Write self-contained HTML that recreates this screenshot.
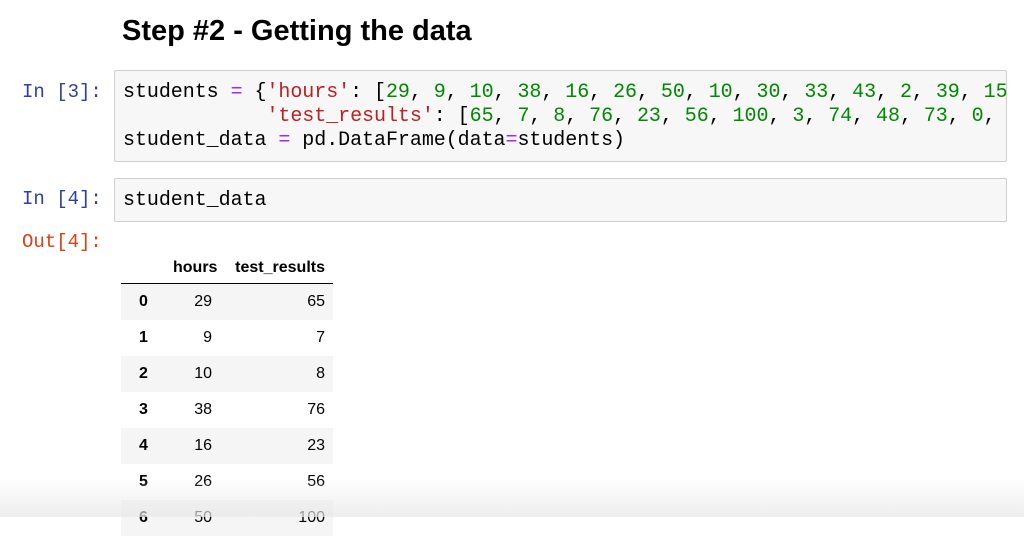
<!DOCTYPE html>
<html><head><style>
body{margin:0;width:1024px;height:517px;overflow:hidden;background:#fff;position:relative;font-family:"Liberation Sans",sans-serif}
h1{position:absolute;left:122px;top:15px;margin:0;font-size:29px;font-weight:bold;color:#000}
.p{position:absolute;font-family:"Liberation Mono",monospace;font-size:19px;color:#303f9f}
.box{position:absolute;left:114px;right:17px;background:#f7f7f7;border:1px solid #cfcfcf;border-radius:2px;overflow:hidden}
pre{margin:0;font-family:"Liberation Mono",monospace;font-size:20px;line-height:24px;color:#000;white-space:pre;padding:10px 0 0 8px;letter-spacing:-0.05px}
.o{color:#aa22ff}.s{color:#ba2121}.n{color:#080}
table{position:absolute;left:121px;top:253px;border-collapse:collapse;font-size:16px;table-layout:fixed;width:212px}
th,td{padding:0 8px;height:36px;text-align:right}
thead th{height:30px;border-bottom:1px solid #000}
tbody th{text-align:left;padding-left:18px}
tbody tr:nth-child(odd){background:#f5f5f5}
.fade{position:absolute;left:0;right:0;top:478px;height:39px;background:linear-gradient(rgba(255,255,255,0),rgba(232,232,232,.75))}
</style></head><body>
<h1>Step #2 - Getting the data</h1>
<div class="p" style="left:22px;top:81px">In [3]:</div>
<div class="box" style="top:70px;height:90px"><pre>students <span class="o">=</span> {<span class="s">'hours'</span>: [<span class="n">29</span>, <span class="n">9</span>, <span class="n">10</span>, <span class="n">38</span>, <span class="n">16</span>, <span class="n">26</span>, <span class="n">50</span>, <span class="n">10</span>, <span class="n">30</span>, <span class="n">33</span>, <span class="n">43</span>, <span class="n">2</span>, <span class="n">39</span>, <span class="n">15</span>
            <span class="s">'test_results'</span>: [<span class="n">65</span>, <span class="n">7</span>, <span class="n">8</span>, <span class="n">76</span>, <span class="n">23</span>, <span class="n">56</span>, <span class="n">100</span>, <span class="n">3</span>, <span class="n">74</span>, <span class="n">48</span>, <span class="n">73</span>, <span class="n">0</span>, <span class="n">6</span>
student_data <span class="o">=</span> pd.DataFrame(data<span class="o">=</span>students)</pre></div>
<div class="p" style="left:22px;top:188px">In [4]:</div>
<div class="box" style="top:178px;height:42px"><pre>student_data</pre></div>
<div class="p" style="left:22px;top:231px;color:#d84315">Out[4]:</div>
<table><colgroup><col style="width:44px"><col style="width:55px"><col style="width:113px"></colgroup>
<thead><tr><th></th><th>hours</th><th>test_results</th></tr></thead>
<tbody>
<tr><th>0</th><td>29</td><td>65</td></tr>
<tr><th>1</th><td>9</td><td>7</td></tr>
<tr><th>2</th><td>10</td><td>8</td></tr>
<tr><th>3</th><td>38</td><td>76</td></tr>
<tr><th>4</th><td>16</td><td>23</td></tr>
<tr><th>5</th><td>26</td><td>56</td></tr>
<tr><th>6</th><td>50</td><td>100</td></tr>
</tbody></table>
<div class="fade"></div>
</body></html>
